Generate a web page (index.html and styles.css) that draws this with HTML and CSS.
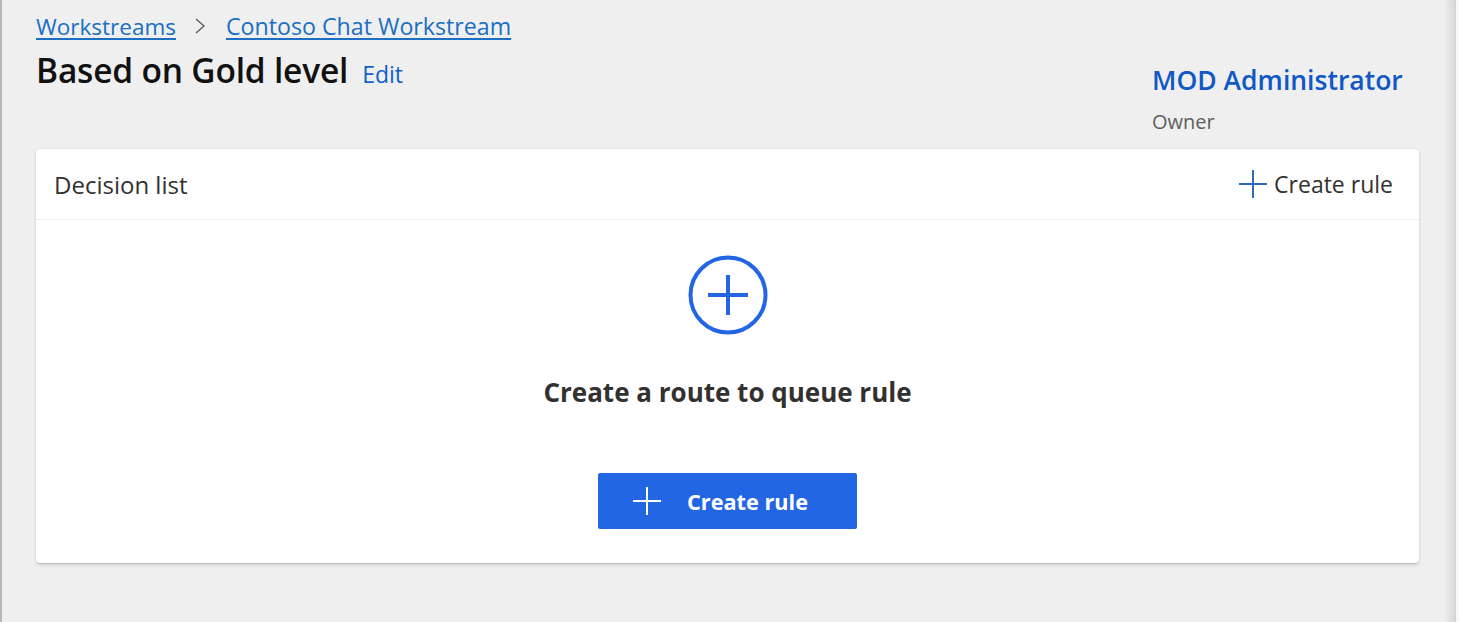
FILE: index.html
```html
<!DOCTYPE html>
<html lang="en">
<head>
<meta charset="utf-8">
<title>Decision list</title>
<link rel="stylesheet" href="styles.css">
</head>
<body>
<div class="page">
  <main class="main">
    <header class="top">
      <div class="top-left">
        <nav class="crumbs">
          <a href="#" class="crumb">Workstreams</a>
          <svg class="chev" width="12" height="20" viewBox="0 0 12 20"><path d="M2 3 L10 10 L2 17" fill="none" stroke="#605e5c" stroke-width="1.4"/></svg>
          <a href="#" class="crumb">Contoso Chat Workstream</a>
        </nav>
        <div class="title-row">
          <h1 class="title">Based on Gold level</h1>
          <a href="#" class="edit">Edit</a>
        </div>
      </div>
      <div class="owner">
        <div class="owner-name">MOD Administrator</div>
        <div class="owner-role">Owner</div>
      </div>
    </header>

    <section class="card">
      <div class="card-head">
        <h2 class="card-title">Decision list</h2>
        <button class="link-btn">
          <svg width="30" height="30" viewBox="0 0 30 30"><path d="M1 15 H29 M15 1 V29" stroke="#2a6cb5" stroke-width="2" fill="none"/></svg>
          <span>Create rule</span>
        </button>
      </div>
      <div class="card-body">
        <svg class="big-plus" width="80" height="80" viewBox="0 0 80 80"><circle cx="40" cy="40" r="37.5" fill="none" stroke="#2266e3" stroke-width="4"/><path d="M20 40 H60 M40 20 V60" stroke="#2266e3" stroke-width="4" fill="none"/></svg>
        <h3 class="empty-title">Create a route to queue rule</h3>
        <button class="primary">
          <svg width="30" height="30" viewBox="0 0 30 30"><path d="M1 15 H29 M15 1 V29" stroke="#ffffff" stroke-width="2" fill="none"/></svg>
          <span>Create rule</span>
        </button>
      </div>
    </section>
  </main>
  <div class="edge"></div>
</div>
</body>
</html>
```

FILE: styles.css
```css
html, body {
  margin: 0;
  padding: 0;
  height: 100%;
}
body {
  background: #efefef;
  font-family: "Open Sans", "Noto Sans", "Liberation Sans", sans-serif;
  color: #323130;
  overflow: hidden;
}
.page {
  display: flex;
  height: 622px;
  border-left: 2px solid #b8b8b8;
  box-sizing: border-box;
}
.main {
  flex: 1;
  padding: 0 36px 0 34px;
  box-shadow: inset -12px 0 10px -8px rgba(0, 0, 0, 0.12);
}
.edge {
  width: 3px;
  background: #f8f8f8;
  border-left: 1px solid #d0d0d0;
}
.top {
  display: flex;
  justify-content: space-between;
  align-items: flex-start;
  height: 149px;
}
.top-left {
  padding-top: 9px;
}
.crumbs {
  display: flex;
  align-items: center;
  gap: 16px;
  height: 34px;
}
.crumb {
  font-size: 22.5px;
  color: #1a6fc2;
  text-decoration: underline;
  text-underline-offset: 3px;
  text-decoration-thickness: 1.5px;
}
.crumb + .chev + .crumb {
  font-size: 23.2px;
}
.chev {
  margin: 0 4px 0 2px;
}
.title-row {
  display: flex;
  align-items: baseline;
  gap: 14px;
  margin-top: 5px;
  line-height: 44px;
}
.title {
  margin: 0;
  font-size: 33.5px;
  font-weight: 600;
  color: #111;
  letter-spacing: -0.2px;
}
.edit {
  font-size: 23px;
  color: #1260c9;
  text-decoration: none;
}
.owner {
  padding-top: 62px;
  padding-right: 18px;
  width: 249px;
}
.owner-name {
  font-size: 26.5px;
  font-weight: 600;
  color: #1058c6;
  line-height: 36px;
  white-space: nowrap;
}
.owner-role {
  margin-top: 11px;
  font-size: 20px;
  color: #605e5c;
  line-height: 26px;
}
.card {
  background: #fff;
  border-radius: 4px;
  box-shadow: 0 1.6px 3.6px rgba(0,0,0,0.13), 0 0.3px 0.9px rgba(0,0,0,0.11);
  height: 414px;
  display: flex;
  flex-direction: column;
}
.card-head {
  height: 70px;
  border-bottom: 1px solid #edebe9;
  display: flex;
  align-items: center;
  justify-content: space-between;
  padding: 0 26px 0 18px;
}
.card-title {
  margin: 0;
  font-size: 24px;
  font-weight: 400;
  color: #323130;
}
.link-btn {
  display: flex;
  align-items: center;
  gap: 6px;
  background: none;
  border: 0;
  padding: 0;
  font-family: inherit;
  font-size: 23px;
  color: #323130;
  cursor: pointer;
}
.card-body {
  display: flex;
  flex-direction: column;
  align-items: center;
  padding-top: 35px;
}
.big-plus {
  display: block;
}
.empty-title {
  margin: 40px 0 0;
  font-size: 26px;
  font-weight: 700;
  color: #323130;
  line-height: 34px;
}
.primary {
  margin-top: 64px;
  width: 259px;
  height: 56px;
  background: #2266e3;
  border: 0;
  border-radius: 2px;
  display: flex;
  align-items: center;
  justify-content: flex-start;
  gap: 25px;
  padding: 0 0 0 34px;
  color: #fff;
  font-family: inherit;
  font-size: 21.7px;
  font-weight: 700;
  cursor: pointer;
}
```
